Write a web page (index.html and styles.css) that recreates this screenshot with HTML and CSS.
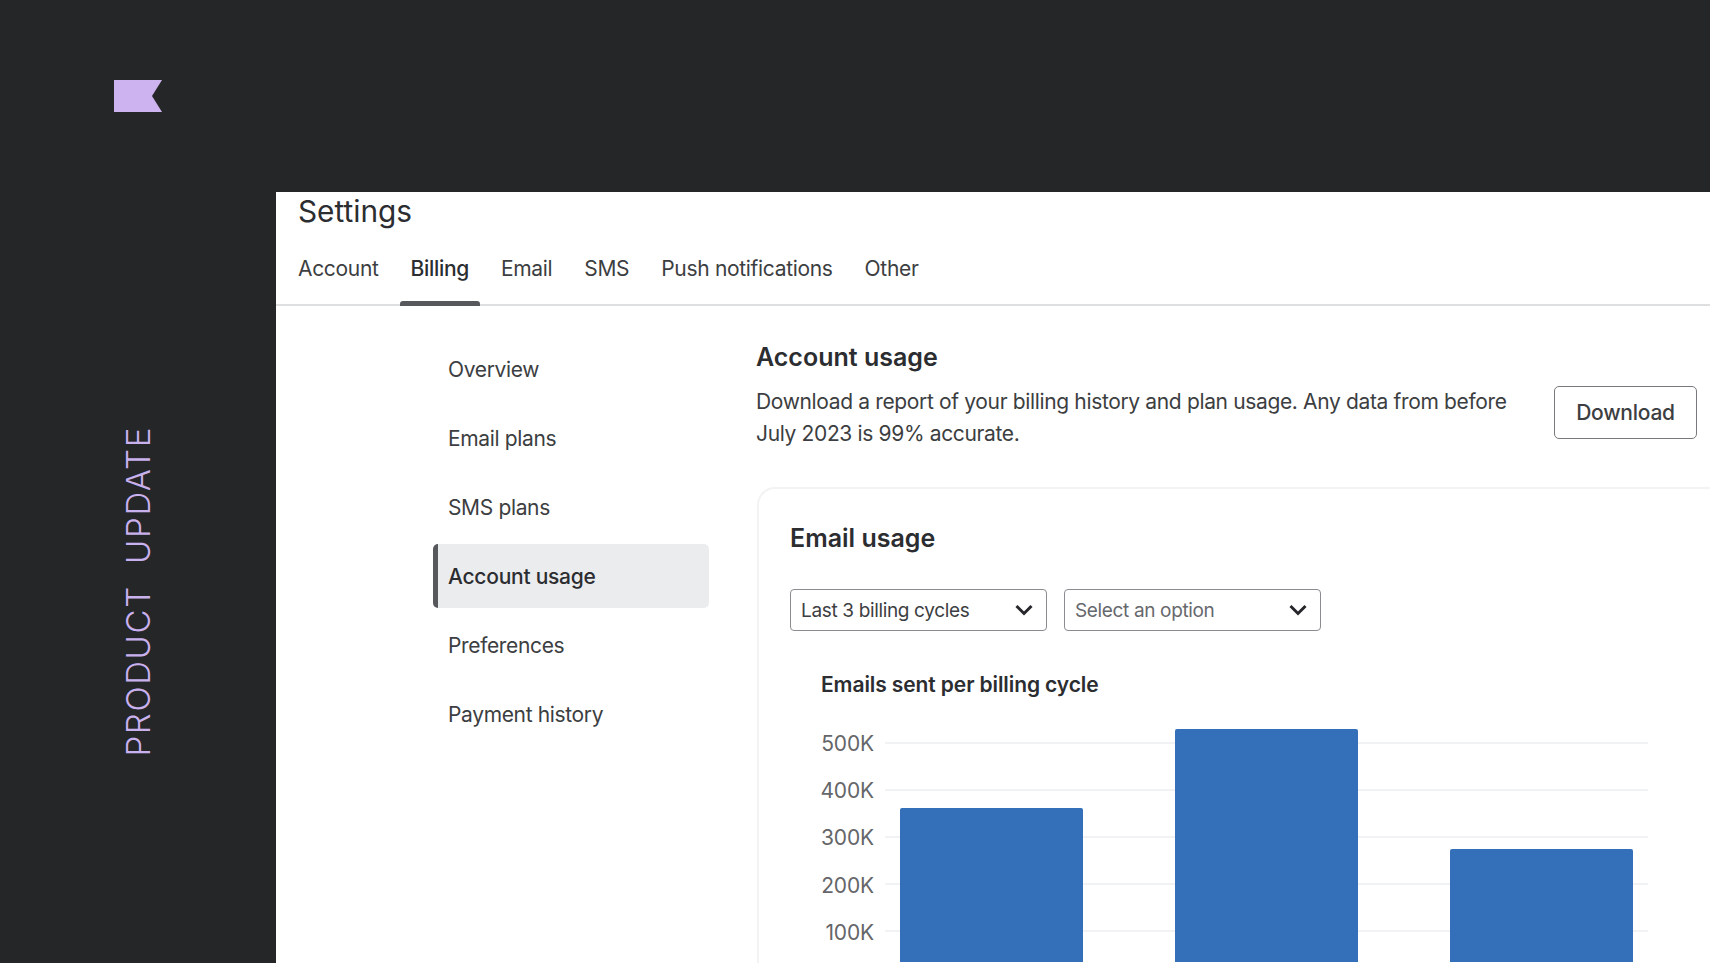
FILE: index.html
```html
<!DOCTYPE html>
<html lang="en">
<head>
<meta charset="utf-8">
<title>Product update</title>
<link rel="stylesheet" href="styles.css">
</head>
<body>
<div class="slide">
  <header class="topband">
    <svg class="logo" viewBox="0 0 48 32" aria-hidden="true"><polygon points="0,0 48,0 38,16 48,32 0,32"/></svg>
  </header>
  <div class="lower">
    <aside class="rail"><span class="rail-text">PRODUCT UPDATE</span></aside>
    <main class="panel">
      <div class="page-head">
        <h1 class="page-title">Settings</h1>
        <nav class="tabs">
          <a class="tab">Account</a>
          <a class="tab tab-active">Billing</a>
          <a class="tab">Email</a>
          <a class="tab">SMS</a>
          <a class="tab">Push notifications</a>
          <a class="tab">Other</a>
        </nav>
      </div>
      <div class="body">
        <nav class="side">
          <a class="side-item">Overview</a>
          <a class="side-item">Email plans</a>
          <a class="side-item">SMS plans</a>
          <a class="side-item side-active">Account usage</a>
          <a class="side-item">Preferences</a>
          <a class="side-item">Payment history</a>
        </nav>
        <section class="content">
          <h2 class="section-title">Account usage</h2>
          <div class="intro">
            <p class="intro-text">Download a report of your billing history and plan usage. Any data from before July 2023 is 99% accurate.</p>
            <button class="download">Download</button>
          </div>
          <div class="card">
            <h3 class="card-title">Email usage</h3>
            <div class="filters">
              <div class="select"><span>Last 3 billing cycles</span><svg class="chev" viewBox="0 0 18 12" aria-hidden="true"><path d="M1.5 2l7.500 7.500L16.500 2"/></svg></div>
              <div class="select select-empty"><span>Select an option</span><svg class="chev" viewBox="0 0 18 12" aria-hidden="true"><path d="M1.5 2l7.500 7.500L16.500 2"/></svg></div>
            </div>
            <h4 class="chart-title">Emails sent per billing cycle</h4>
            <div class="chart">
              <div class="grid-row"><span class="y-label">500K</span><span class="grid-line"></span></div>
              <div class="grid-row"><span class="y-label">400K</span><span class="grid-line"></span></div>
              <div class="grid-row"><span class="y-label">300K</span><span class="grid-line"></span></div>
              <div class="grid-row"><span class="y-label">200K</span><span class="grid-line"></span></div>
              <div class="grid-row"><span class="y-label">100K</span><span class="grid-line"></span></div>
              <div class="bars">
                <div class="bar bar-a"></div>
                <div class="bar bar-b"></div>
                <div class="bar bar-c"></div>
              </div>
            </div>
          </div>
        </section>
      </div>
    </main>
  </div>
</div>
</body>
</html>
```
FILE: styles.css
```css
* { box-sizing: border-box; }
html, body { margin: 0; height: 100%; overflow: hidden; }
body { background: #252628; font-family: Inter, "Liberation Sans", sans-serif; color: #2b2d30; }
.slide { height: 963px; width: 1710px; display: flex; flex-direction: column; overflow: hidden; }
.topband { height: 192px; flex: none; padding: 80px 0 0 114px; }
.logo { display: block; width: 48px; height: 32px; fill: #cdb4f0; }
.lower { flex: 1; min-height: 0; display: flex; }
.rail { width: 276px; flex: none; padding: 234px 0 0 121px; }
.rail-text { display: block; writing-mode: vertical-rl; transform: rotate(180deg); font-size: 33px; font-weight: 300; letter-spacing: 1.7px; word-spacing: 10px; line-height: 34px; color: #c9b1ee; white-space: nowrap; }
.panel { flex: 1; min-width: 0; background: #fff; overflow: hidden; }
.page-head { height: 114px; border-bottom: 2px solid #dedfe0; padding-left: 22px; }
.page-title { margin: 0; font-size: 29.8px; line-height: 38px; font-weight: 400; }
.tabs { display: flex; gap: 32px; margin-top: 20px; }
.tab { position: relative; font-size: 21px; letter-spacing: -0.32px; line-height: 38px; height: 56px; color: #3c3e41; }
.tab-active { font-weight: 500; color: #2b2d30; }
.tab-active::after { content: ""; position: absolute; left: -11px; right: -11px; bottom: 0; height: 5px; border-radius: 3px 3px 0 0; background: #56585c; }
.body { display: flex; }
.side { width: 276px; margin: 31px 0 0 157px; flex: none; display: flex; flex-direction: column; gap: 5px; }
.side-item { height: 64px; padding-left: 15px; font-size: 21px; letter-spacing: -0.35px; line-height: 66px; color: #3c3e41; border-radius: 5px; }
.side-active { background: #ebecee; border-left: 5px solid #56585c; padding-left: 10px; font-weight: 500; letter-spacing: -0.25px; color: #2b2d30; }
.content { width: 941px; margin-left: 47px; flex: none; padding-top: 35px; }
.section-title { margin: 0; font-size: 25px; line-height: 32px; font-weight: 600; }
.intro { display: flex; justify-content: space-between; align-items: flex-start; margin-top: 13px; }
.intro-text { margin: 0; width: 770px; font-size: 21px; letter-spacing: -0.35px; line-height: 32px; color: #3c3e41; }
.download { width: 143px; height: 53px; background: #fff; border: 1.5px solid #77797c; border-radius: 5px; font: 500 21px Inter, "Liberation Sans", sans-serif; letter-spacing: -0.25px; color: #3c3e41; padding: 0; }
.card { margin: 37px 0 0 1px; width: 1000px; height: 520px; border: 2px solid #f3f3f4; border-right: 0; border-radius: 18px 0 0 0; padding: 0 0 0 31px; }
.card-title { margin: 32px 0 0; font-size: 25px; line-height: 34px; font-weight: 600; }
.filters { display: flex; gap: 17px; margin-top: 34px; }
.select { width: 257px; height: 42px; display: flex; align-items: center; justify-content: space-between; padding: 0 13px 0 10px; border: 1.5px solid #8a8c8f; border-radius: 4px; font-size: 19px; letter-spacing: -0.35px; color: #3c3e41; }
.select-empty { color: #66686c; }
.chev { width: 18px; height: 12px; fill: none; stroke: #25272a; stroke-width: 3; }
.chart-title { margin: 40px 0 0 31px; font-size: 21px; letter-spacing: -0.1px; line-height: 28px; font-weight: 600; }
.chart { position: relative; margin-top: 20px; height: 243px; }
.grid-row { height: 47.2px; display: flex; align-items: center; gap: 11px; }
.y-label { width: 84px; padding-top: 2px; text-align: right; font-size: 21px; letter-spacing: -0.15px; color: #646669; }
.grid-line { width: 763px; height: 2px; background: #f1f2f3; }
.bars { position: absolute; left: 110px; bottom: 0; top: 0; display: flex; gap: 92px; align-items: flex-end; }
.bar { width: 183px; background: #3370b9; border-radius: 2px 2px 0 0; }
.bar-a { height: 154px; }
.bar-b { height: 233px; }
.bar-c { height: 113px; }
```
